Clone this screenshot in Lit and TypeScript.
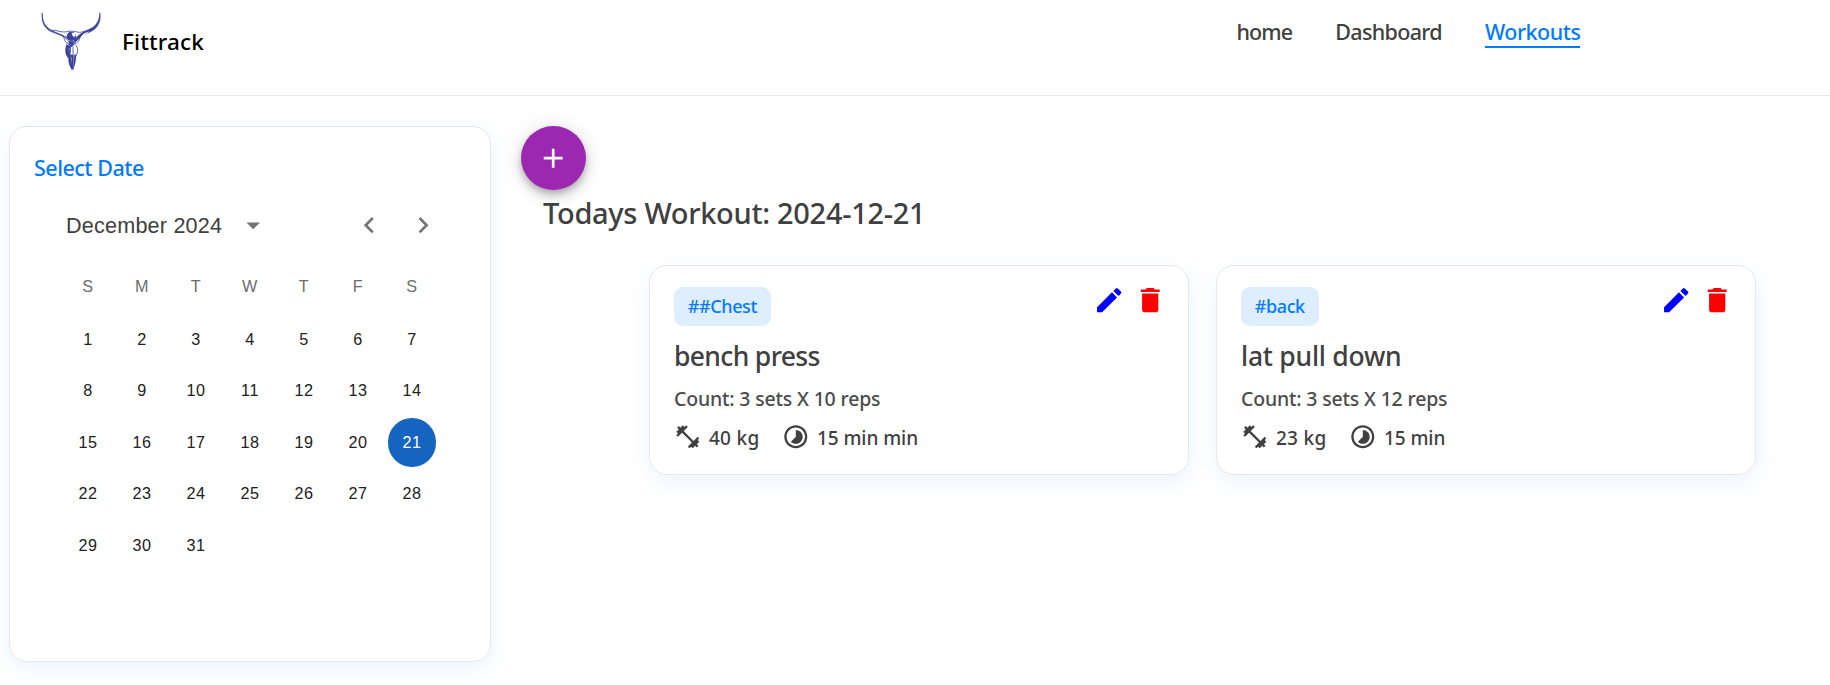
import { LitElement, html, css } from 'lit';
import { classMap } from 'lit/directives/class-map.js';

const icon = (size: number, d: string, cls = '') =>
  html`<svg class=${cls} width=${size} height=${size} viewBox="0 0 24 24" fill="currentColor"><path d=${d} /></svg>`;

const ADD = 'M19 13h-6v6h-2v-6H5v-2h6V5h2v6h6v2z';
const EDIT = 'M3 17.25V21h3.75L17.81 9.94l-3.75-3.75L3 17.25zM20.71 7.04c.39-.39.39-1.02 0-1.41l-2.34-2.34a.9959.9959 0 0 0-1.41 0l-1.83 1.83 3.75 3.75 1.83-1.83z';
const TRASH = 'M6 19c0 1.1.9 2 2 2h8c1.1 0 2-.9 2-2V7H6v12zM19 4h-3.5l-1-1h-5l-1 1H5v2h14V4z';
const BARBELL = 'M20.57 14.86 22 13.43 20.57 12 17 15.57 8.43 7 12 3.43 10.57 2 9.14 3.43 7.71 2 5.57 4.14 4.14 2.71 2.71 4.14l1.43 1.43L2 7.71l1.43 1.43L2 10.57 3.43 12 7 8.43 15.57 17 12 20.57 13.43 22l1.43-1.43L16.29 22l2.14-2.14 1.43 1.43 1.43-1.43-1.43-1.43L22 16.29z';
const TIMELAPSE = 'M16.24 7.76C15.07 6.59 13.54 6 12 6v6l-4.24 4.24c2.34 2.34 6.14 2.34 8.49 0 2.34-2.34 2.34-6.14-.01-8.48zM12 2C6.48 2 2 6.48 2 12s4.48 10 10 10 10-4.48 10-10S17.52 2 12 2zm0 18c-4.42 0-8-3.58-8-8s3.58-8 8-8 8 3.58 8 8-3.58 8-8 8z';
const DROPDOWN = 'M7 10l5 5 5-5z';
const LEFT = 'M15.41 7.41 14 6l-6 6 6 6 1.41-1.41L10.83 12z';
const RIGHT = 'M10 6 8.59 7.41 13.17 12l-4.58 4.59L10 18l6-6z';

class NavBar extends LitElement {
  static styles = css`
    :host { display: block; font-family: 'Noto Sans', sans-serif; font-weight: 500; }
    .bar { box-sizing: border-box; height: 96px; border-bottom: 1px solid #e6e6e6; display: flex; align-items: flex-start; }
    .brand { display: flex; align-items: center; padding: 5px 0 0 30px; gap: 7px; }
    .name { font-size: 22.5px; line-height: 30px; color: #000; letter-spacing: 0.15px; padding-top: 3px; }
    .links { display: flex; align-items: flex-start; gap: 43px; margin-left: 1032.5px; padding-top: 17px; font-size: 21.5px; line-height: 30px; color: #404040; letter-spacing: -0.65px; }
    .home { letter-spacing: -0.9px; }
    .active { color: #007aff; line-height: 29px; border-bottom: 2px solid #007aff; letter-spacing: -0.5px; }
  `;
  render() {
    return html`<header class="bar">
      <div class="brand">
        <svg width="85" height="70" viewBox="0 0 255 210" fill="#3b439b">
          <path d="M36 24C33 56 47 76 74 84C91 90 107 97 117 103L115 99C98 92 86 86 71 79C47 69 37 52 37 24Z" stroke="#3b439b" stroke-width="1.5" />
          <path d="M210 24C215 55 198 75 175 83C158 89 143 103 136 112L131 107C139 95 154 82 170 77C193 69 209 52 209 24Z" stroke="#3b439b" stroke-width="1.5" />
          <path d="M152 95C157 87 168 82 178 79C168 88 158 91 154 102L146 112Z" fill="#fff" />
          <g fill="none" stroke="#3b439b" stroke-width="2.4">
            <path d="M66 75C82 76 93 82 106 81C115 77 136 78 145 82C159 83 173 75 186 69" />
            <path d="M80 85C91 88 101 92 104 106C108 115 115 116 120 120M169 80C152 86 151 92 148 104C145 114 135 115 128 121M92 88C104 93 111 106 119 112M160 86C148 99 142 105 130 114" />
            <path d="M136 119C145 128 144 143 138 152C133 157 136 167 133 181L128 194M129 125V190M113 111L124 125L136 111" />
          </g>
          <circle cx="124" cy="94" r="14" />
          <path d="M116 108L132 109L129 124L120 125Z" />
          <path d="M109 118L122 123C125 138 119 148 121 165L125 193C119 187 115 174 115 160C102 146 106 130 109 118Z" />
          <path d="M121 148L131 151L130 193L124 194L120 168Z" />
          <path d="M133 148L139 150L136 174L131 187Z" />
          <path d="M125 83L135 84L137 92L131 96L127 91Z" fill="#fff" />
          <path d="M116 130L119 129L117 143Z" fill="#fff" opacity=".6" />
          <path d="M123 158L125 158L125 176Z" fill="#fff" opacity=".7" />
        </svg>
        <span class="name">Fittrack</span>
      </div>
      <nav class="links"><span class="home">home</span><span>Dashboard</span><span class="active">Workouts</span></nav>
    </header>`;
  }
}
customElements.define('nav-bar', NavBar);

class DatePanel extends LitElement {
  static properties = { selected: { type: Number } };
  selected = 21;
  static styles = css`
    :host { display: block; }
    .panel { box-sizing: border-box; width: 482px; height: 536px; border: 1px solid #40404020; border-radius: 18px; box-shadow: 1px 7px 23px 0 #007aff15; padding-top: 26px; }
    .title { padding-left: 24px; font: 500 21.5px/30px 'Noto Sans', sans-serif; letter-spacing: -0.5px; color: #007aff; }
    .cal { width: 378px; margin: 0 auto; font-family: 'Liberation Sans', Arial, sans-serif; }
    .head { display: flex; align-items: center; height: 50px; margin-top: 17.5px; color: #757575; }
    .month { font-size: 21.6px; letter-spacing: 0.2px; color: #404040; padding-left: 5px; width: 176px; box-sizing: border-box; white-space: nowrap; }
    .prev { margin-left: 83.5px; }
    .next { margin-left: 21.8px; }
    .grid { display: grid; grid-template-columns: repeat(7, 54px); }
    .week { grid-auto-rows: 54px; margin-top: 8.5px; color: #6c6c6c; }
    .days { grid-auto-rows: 51.4px; margin-top: 0.8px; color: #212121; }
    .cell { display: flex; align-items: center; justify-content: center; font-size: 16.2px; letter-spacing: 0.5px; }
    .dot { width: 48.6px; height: 48.6px; border-radius: 50%; display: flex; align-items: center; justify-content: center; flex: none; }
    .on { background: #1565c0; color: #fff; }
  `;
  render() {
    return html`<section class="panel">
      <div class="title">Select Date</div>
      <div class="cal">
        <div class="head">
          <span class="month">December 2024</span>
          ${icon(32.4, DROPDOWN, 'drop')}${icon(32.4, LEFT, 'prev')}${icon(32.4, RIGHT, 'next')}
        </div>
        <div class="grid week">${[...'SMTWTFS'].map((d) => html`<span class="cell">${d}</span>`)}</div>
        <div class="grid days">
          ${Array.from({ length: 31 }, (_, i) => i + 1).map(
            (d) => html`<span class="cell"><span class=${classMap({ dot: true, on: d === this.selected })}>${d}</span></span>`,
          )}
        </div>
      </div>
    </section>`;
  }
}
customElements.define('date-panel', DatePanel);

class WorkoutCard extends LitElement {
  static properties = { item: { attribute: false } };
  item: any;
  static styles = css`
    :host { display: block; font-family: 'Noto Sans', sans-serif; font-weight: 500; color: #404040; }
    .card { box-sizing: border-box; height: 210px; border: 1px solid #40404020; border-radius: 18px; box-shadow: 1px 7px 23px 0 #007aff15; padding: 21px 22px 0 24px; }
    .top { display: flex; justify-content: space-between; align-items: flex-start; }
    .tag { background: #dfeeff; color: #007aff; border-radius: 9px; height: 39px; line-height: 39px; padding: 0 13.8px; font-size: 18px; letter-spacing: -0.4px; }
    .actions { display: flex; gap: 8.6px; margin-top: -3px; }
    .edit { color: #0000ff; }
    .del { color: #ff0000; }
    .name { margin-top: 12px; font-size: 26.5px; line-height: 36px; }
    .n0 { letter-spacing: -0.65px; }
    .n1 { letter-spacing: -0.25px; }
    .count { margin-top: 11px; font-size: 19.5px; line-height: 28px; letter-spacing: -0.18px; color: #4c4c4c; }
    .meta { display: flex; gap: 22.5px; margin-top: 9.5px; font-size: 19px; line-height: 30px; }
    .stat { display: flex; gap: 7.3px; align-items: flex-start; }
    .kg { letter-spacing: 0.3px; }
    .time { letter-spacing: -0.05px; }
    .stat span { padding-top: 0.5px; }
  `;
  render() {
    const w = this.item;
    return html`<article class="card">
      <div class="top">
        <span class="tag">${w.tag}</span>
        <div class="actions">${icon(32.4, EDIT, 'edit')}${icon(32.4, TRASH, 'del')}</div>
      </div>
      <div class=${classMap({ name: true, n0: w.tight, n1: !w.tight })}>${w.name}</div>
      <div class="count">Count: ${w.sets} sets X ${w.reps} reps</div>
      <div class="meta">
        <div class="stat kg">${icon(27.6, BARBELL)}<span>${w.weight} kg</span></div>
        <div class="stat time">${icon(27.6, TIMELAPSE)}<span>${w.time}</span></div>
      </div>
    </article>`;
  }
}
customElements.define('workout-card', WorkoutCard);

class AppRoot extends LitElement {
  static styles = css`
    :host { display: block; height: 685px; overflow: hidden; background: #fff; }
    .page { display: flex; align-items: flex-start; padding: 30px 0 0 9px; }
    .main { margin-left: 30px; width: 1235px; }
    .fab { width: 65px; height: 64px; border-radius: 50%; border: 0; padding: 0; background: #9c27b0; color: #fff; display: flex; align-items: center; justify-content: center;
      box-shadow: 0 3.5px 6px -1px rgba(0,0,0,.2), 0 7px 11.5px 0 rgba(0,0,0,.14), 0 1px 21px 0 rgba(0,0,0,.12); }
    .heading { margin: 3px 0 0 22px; font: 500 29px/40px 'Noto Sans', sans-serif; letter-spacing: -0.3px; color: #404040; white-space: nowrap; }
    .cards { display: grid; grid-template-columns: 540px 540px; gap: 27px; margin: 32px 0 0 128px; }
  `;
  items = [
    { tag: '##Chest', name: 'bench press', sets: 3, reps: 10, weight: 40, time: '15 min min', tight: true },
    { tag: '#back', name: 'lat pull down', sets: 3, reps: 12, weight: 23, time: '15 min', tight: false },
  ];
  render() {
    return html`<nav-bar></nav-bar>
      <div class="page">
        <date-panel></date-panel>
        <main class="main">
          <button class="fab">${icon(32.4, ADD)}</button>
          <div class="heading">Todays Workout: 2024-12-21</div>
          <div class="cards">${this.items.map((w) => html`<workout-card .item=${w}></workout-card>`)}</div>
        </main>
      </div>`;
  }
}
customElements.define('app-root', AppRoot);
